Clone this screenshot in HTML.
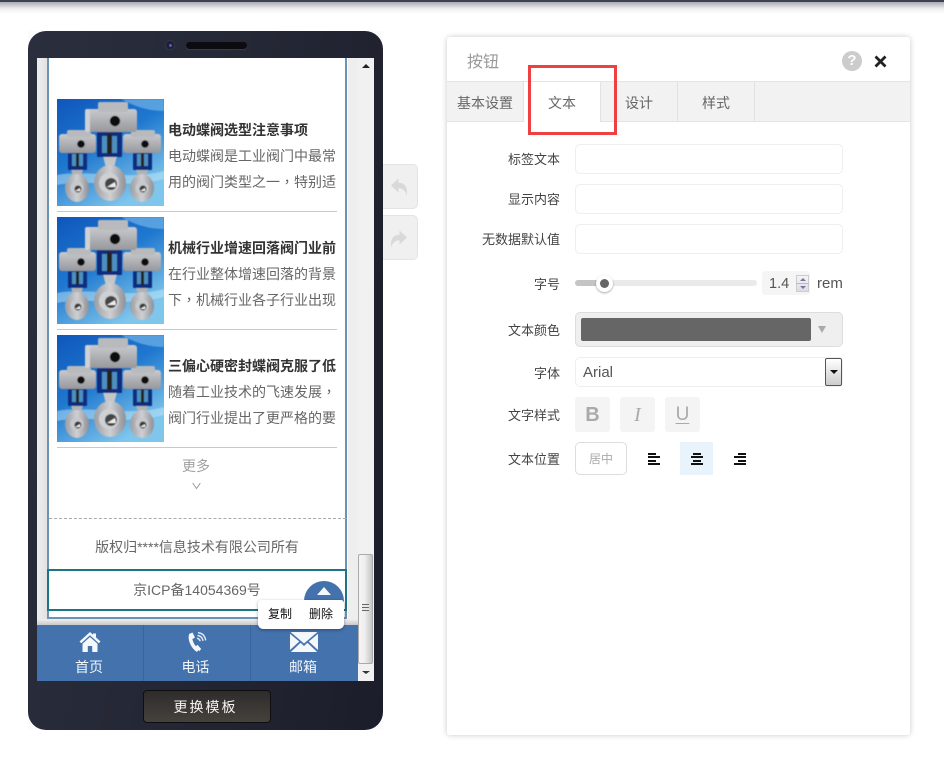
<!DOCTYPE html>
<html lang="zh"><head><meta charset="utf-8"><title>按钮</title>
<style>
*{box-sizing:border-box}
html,body{margin:0;padding:0}
body{width:944px;height:760px;background:#fff;position:relative;overflow:hidden;font-family:"Liberation Sans","Noto Sans CJK SC",sans-serif;color:#555}
.a{position:absolute}
.t{position:absolute;white-space:nowrap}
.c{font-family:"Noto Sans CJK TC",sans-serif}
.lb{position:absolute;left:447px;width:113px;text-align:right;font-size:13px;line-height:20px;color:#444;white-space:nowrap}
.in{position:absolute;left:575px;width:268px;height:30px;border:1px solid #eee;border-radius:5px;background:#fff}
.tab{position:absolute;top:81px;height:41px;width:77px;text-align:center;font-size:14px;line-height:45px;color:#666;border-right:1px solid #e2e2e2}
.ttl{position:absolute;left:168px;font-size:14px;font-weight:bold;color:#333;line-height:20px;white-space:nowrap;width:169px;overflow:hidden}
.ds{position:absolute;left:168px;font-size:14px;color:#666;line-height:26px;white-space:nowrap;width:170px;overflow:hidden}
.hr{position:absolute;left:57px;width:280px;height:1px;background:#c8c8c8}
.nv{position:absolute;top:659px;font-size:14px;line-height:16px;color:#f2f6fb;text-align:center}
.sb{position:absolute;top:397px;width:35px;height:35px;background:#f4f4f4;border-radius:3px;text-align:center;color:#aaa}
</style></head>
<body>
<svg width="0" height="0" style="position:absolute">
<defs>
<linearGradient id="vb" x1="0" y1="0" x2=".6" y2="1"><stop offset="0" stop-color="#0f56bb"/><stop offset=".5" stop-color="#1f78cf"/><stop offset="1" stop-color="#7fc6ec"/></linearGradient>
<linearGradient id="mt" x1="0" y1="0" x2="1" y2="0"><stop offset="0" stop-color="#9b9da2"/><stop offset=".5" stop-color="#cfd0d4"/><stop offset="1" stop-color="#8e9095"/></linearGradient>
<linearGradient id="bd" x1="0" y1="0" x2="0" y2="1"><stop offset="0" stop-color="#c9cacd"/><stop offset="1" stop-color="#96989d"/></linearGradient>
<filter id="sf" x="-5%" y="-5%" width="110%" height="110%"><feGaussianBlur stdDeviation=".4"/></filter>
<symbol id="valve" viewBox="0 0 107 107">
<rect width="107" height="107" fill="url(#vb)"/>
<g filter="url(#sf)">
<path d="M64 0C78 8 92 12 107 12V0Z" fill="#6fb4e8" opacity=".7"/>
<path d="M0 76C30 70 70 82 107 72V80C70 90 30 80 0 86Z" fill="#cdeefa" opacity=".45"/>
<path d="M14 70h12l-2 8h-8z" fill="#b0b2b6"/><path d="M79 70h12l-2 8h-8z" fill="#b0b2b6"/>
<ellipse cx="20" cy="89" rx="12" ry="14" fill="url(#mt)"/><circle cx="20" cy="89" r="6.500" fill="#c8c9cc"/><circle cx="21" cy="90" r="3.500" fill="#3a3a3d"/><path d="M18 92l5-3 .5 3z" fill="#eee"/>
<ellipse cx="85" cy="89" rx="12" ry="14" fill="url(#mt)"/><circle cx="85" cy="89" r="6.500" fill="#c8c9cc"/><circle cx="86" cy="90" r="3.500" fill="#3a3a3d"/><path d="M83 92l5-3 .5 3z" fill="#eee"/>
<rect x="11" y="52" width="19" height="19" rx="1" fill="#0e2f80"/><rect x="15" y="55" width="11" height="12" fill="#4e8fbe"/><rect x="19" y="53" width="3" height="15" fill="#222"/>
<rect x="76" y="52" width="19" height="19" rx="1" fill="#0e2f80"/><rect x="80" y="55" width="11" height="12" fill="#4e8fbe"/><rect x="84" y="53" width="3" height="15" fill="#222"/>
<rect x="2" y="35" width="37" height="19" rx="3" fill="url(#bd)"/><rect x="10" y="31" width="24" height="7" rx="2" fill="#b8babd"/><circle cx="24" cy="45" r="3.800" fill="#0a0a0a"/>
<rect x="66" y="35" width="38" height="19" rx="3" fill="url(#bd)"/><rect x="74" y="31" width="24" height="7" rx="2" fill="#b8babd"/><circle cx="88" cy="45" r="3.800" fill="#0a0a0a"/>
<path d="M46 57h14l-3 12h-8z" fill="#c4c6c9"/>
<ellipse cx="53" cy="84" rx="16" ry="18" fill="url(#mt)"/><circle cx="52" cy="84" r="10" fill="#cfd0d3"/><circle cx="54" cy="85" r="6" fill="#444"/><path d="M50 88l8-5 1 5z" fill="#eee"/>
<rect x="40" y="32" width="25" height="26" rx="1" fill="#0e2f80"/><rect x="45" y="37" width="15" height="17" fill="#4e8fbe"/><rect x="50" y="35" width="5" height="20" fill="#222"/>
<rect x="28" y="10" width="52" height="23" rx="3" fill="url(#bd)"/><rect x="28" y="10" width="5" height="23" rx="2" fill="#d0d1d4"/><rect x="41" y="3" width="30" height="10" rx="2" fill="#b8babd"/><circle cx="58" cy="22" r="5.200" fill="#0a0a0a"/>
</g>
</symbol>
</defs>
</svg>

<div class="a" style="left:0;top:0;width:944px;height:2px;background:#3f4350"></div>
<div class="a" style="left:0;top:2px;width:944px;height:12px;background:linear-gradient(#a9abb2,#eeeeef 55%,#fff)"></div>

<!-- phone -->
<div class="a" style="left:28px;top:31px;width:355px;height:699px;background:#fbfbfb"></div>
<div class="a" style="left:28px;top:31px;width:355px;height:699px;border-radius:18px;background:linear-gradient(100deg,#2b2f3d 0%,#252836 45%,#1c1d2b 100%)"></div>
<div class="a" style="left:166px;top:41px;width:8px;height:8px;border-radius:50%;background:#1d2030;box-shadow:0 0 0 1px #333748"></div>
<div class="a" style="left:169px;top:44px;width:3px;height:3px;border-radius:50%;background:#6a50b8"></div>
<div class="a" style="left:186px;top:42px;width:61px;height:7px;border-radius:4px;background:#0b0b10;box-shadow:0 1px 1px #3a3d4b"></div>

<!-- screen -->
<div class="a" style="left:37px;top:58px;width:337px;height:623px;background:#fff;overflow:hidden">
 <div class="a" style="left:0;top:0;width:10px;height:567px;background:linear-gradient(90deg,#eee,#e2e2e2)"></div>
 <div class="a" style="left:311px;top:0;width:10px;height:567px;background:#eee"></div>
 <div class="a" style="left:0;top:561px;width:321px;height:6px;background:linear-gradient(#efefef,#c9c9c9)"></div>
 <div class="a" style="left:321px;top:0;width:16px;height:623px;background:#f1f1f1"></div>
</div>
<div class="a" style="left:47px;top:58px;width:300px;height:561px;background:#fff;border:2px solid #6a93b4;border-top:0"></div>

<svg class="a" style="left:57px;top:99px" width="107" height="107"><use href="#valve"/></svg>
<svg class="a" style="left:57px;top:217px" width="107" height="107"><use href="#valve"/></svg>
<svg class="a" style="left:57px;top:335px" width="107" height="107"><use href="#valve"/></svg>

<div class="ttl" style="top:120px">电动蝶阀选型注意事项</div>
<div class="ds" style="top:143px">电动蝶阀是工业阀门中最常<br>用的阀门类型之一<span class="c" lang="zh-Hant">，</span>特别适</div>
<div class="hr" style="top:211px"></div>
<div class="ttl" style="top:238px">机械行业增速回落阀门业前</div>
<div class="ds" style="top:261px">在行业整体增速回落的背景<br>下<span class="c" lang="zh-Hant">，</span>机械行业各子行业出现</div>
<div class="hr" style="top:329px"></div>
<div class="ttl" style="top:356px">三偏心硬密封蝶阀克服了低</div>
<div class="ds" style="top:379px">随着工业技术的飞速发展<span class="c" lang="zh-Hant">，</span><br>阀门行业提出了更严格的要</div>
<div class="hr" style="top:447px"></div>

<div class="t" style="left:46px;width:300px;top:456px;text-align:center;font-size:14px;line-height:20px;color:#a0a0a0">更多</div>
<svg class="a" style="left:192px;top:482px" width="9" height="8"><path d="M.7 1l3.800 5.500L8.300 1" fill="none" stroke="#999" stroke-width="1"/></svg>
<div class="a" style="left:49px;top:518px;width:297px;border-top:1px dashed #aaa"></div>
<div class="t" style="left:47px;width:300px;top:537px;text-align:center;font-size:14px;line-height:20px;color:#666">版权归****信息技术有限公司所有</div>
<div class="a" style="left:47px;top:569px;width:300px;height:42px;border:2px solid #1b7585;background:#fff"></div>
<div class="t" style="left:47px;width:300px;top:580px;text-align:center;font-size:14px;line-height:20px;color:#666">京ICP备14054369号</div>

<!-- nav -->
<div class="a" style="left:37px;top:625px;width:321px;height:56px;background:#4372ad"></div>
<div class="a" style="left:143px;top:625px;width:1px;height:56px;background:#3a659c"></div>
<div class="a" style="left:250px;top:625px;width:1px;height:56px;background:#3a659c"></div>
<svg class="a" style="left:78px;top:631px" width="24" height="22"><path d="M12 1L1.500 10.500l1.700 1.700L12 4.300l8.800 7.900 1.700-1.700L18 6.400V2.500h-3v1.200z" fill="#f4f7fb"/><path d="M12 6L4.500 12.700V21h5.300v-6h4.400v6h5.300v-8.300z" fill="#f4f7fb"/></svg>
<svg class="a" style="left:186px;top:631px" width="22" height="22"><path d="M5 3.500C3 8 6.500 16 12 19.500" fill="none" stroke="#f4f7fb" stroke-width="3.600"/><path d="M3 3l3.500-1.500 2.500 5-3 1.800zM9.500 15.500l2-1.800 3.700 4.300-2 2.300z" fill="#f4f7fb"/><path d="M11 7.200c1.800.3 2.800 1.300 3.100 3.100M11.500 4.400c3.200.4 5 2.200 5.500 5.500M12 1.600c4.400.5 7 3.300 7.700 7.800" fill="none" stroke="#dde7f2" stroke-width="1.500"/></svg>
<svg class="a" style="left:290px;top:632px" width="28" height="20"><path d="M.5 0h27L14 11.500z" fill="#f4f7fb"/><path d="M0 1.800V18l9.300-8.500zM28 1.800V18l-9.300-8.500z" fill="#f4f7fb"/><path d="M.8 20h26.400l-9.800-9.200L14 14l-3.400-3.200z" fill="#f4f7fb"/></svg>
<div class="nv" style="left:36px;width:106px">首页</div>
<div class="nv" style="left:142px;width:107px">电话</div>
<div class="nv" style="left:249px;width:108px">邮箱</div>

<!-- back to top + popup, above nav -->
<div class="a" style="left:304px;top:581px;width:40px;height:40px;border-radius:50%;background:#4372ad"></div>
<div class="a" style="left:317px;top:587px;width:0;height:0;border-left:7px solid transparent;border-right:7px solid transparent;border-bottom:8px solid #f4f7fb"></div>
<div class="a" style="left:258px;top:600px;width:86px;height:29px;background:#fff;border-radius:3px 3px 5px 5px;box-shadow:0 1px 3px rgba(0,0,0,.35)"></div>
<div class="t" style="left:268px;top:605px;font-size:12px;line-height:18px;color:#111">复制</div>
<div class="t" style="left:309px;top:605px;font-size:12px;line-height:18px;color:#111">删除</div>

<!-- scrollbar -->
<div class="a" style="left:362px;top:64px;width:0;height:0;border-left:4px solid transparent;border-right:4px solid transparent;border-bottom:4px solid #222"></div>
<div class="a" style="left:362px;top:671px;width:0;height:0;border-left:4px solid transparent;border-right:4px solid transparent;border-top:3px solid #333"></div>
<div class="a" style="left:358px;top:554px;width:15px;height:110px;border:1px solid #aaa;border-radius:2px;background:linear-gradient(90deg,#f5f5f5,#eee 45%,#c4c4c4)"></div>
<div class="a" style="left:362px;top:604px;width:7px;height:7px;background:repeating-linear-gradient(#666 0 1px,#e8e8e8 1px 3px)"></div>

<!-- change template -->
<div class="a" style="left:143px;top:690px;width:128px;height:33px;border:1px solid #0e0e10;border-radius:4px;background:linear-gradient(#2e2c2b,#45423d);color:#f2f2f2;font-size:14px;line-height:32px;text-align:center;letter-spacing:2px;padding-right:3px">更换模板</div>

<!-- undo redo -->
<div class="a" style="left:383px;top:164px;width:35px;height:45px;background:#f0f0f0;border:1px solid #e4e4e4;border-left:0;border-radius:0 5px 5px 0"></div>
<div class="a" style="left:383px;top:215px;width:35px;height:45px;background:#f0f0f0;border:1px solid #e4e4e4;border-left:0;border-radius:0 5px 5px 0"></div>
<svg class="a" style="left:390px;top:177px" width="20" height="20"><path d="M1 8.500L8.500 1.500v4.300c6 0 9.500 4 8.200 12.700-1.300-5-4-7.300-8.200-7.300v4.300z" fill="#d9d9d9"/></svg>
<svg class="a" style="left:389px;top:229px" width="20" height="20"><path d="M18 8.500L10.500 1.500v4.300c-6 0-9.500 4-8.200 12.700 1.300-5 4-7.300 8.200-7.300v4.300z" fill="#d9d9d9"/></svg>

<!-- panel -->
<div class="a" style="left:447px;top:37px;width:463px;height:698px;background:#fff;border-radius:3px;box-shadow:0 0 6px rgba(0,0,0,.22)"></div>
<div class="t" style="left:467px;top:52px;font-size:16px;line-height:22px;color:#999">按钮</div>
<div class="a" style="left:842px;top:51px;width:20px;height:20px;border-radius:50%;background:#ccc;color:#fff;text-align:center;font-size:15px;font-weight:bold;line-height:20px">?</div>
<svg class="a" style="left:874px;top:55px" width="13" height="13"><path d="M1.500 1.500l10 10M11.500 1.500l-10 10" stroke="#222" stroke-width="2.800" fill="none"/></svg>

<div class="a" style="left:447px;top:81px;width:463px;height:41px;background:#f2f2f2;border-top:1px solid #e4e4e4;border-bottom:1px solid #e4e4e4"></div>
<div class="tab" style="left:447px">基本设置</div>
<div class="tab" style="left:524px;background:#fff;height:40px;top:82px;line-height:43px">文本</div>
<div class="tab" style="left:601px">设计</div>
<div class="tab" style="left:678px">样式</div>
<div class="a" style="left:528px;top:65px;width:89px;height:70px;border:3px solid #ee4040"></div>

<div class="lb" style="top:150px">标签文本</div>
<div class="in" style="top:144px"></div>
<div class="lb" style="top:190px">显示内容</div>
<div class="in" style="top:184px"></div>
<div class="lb" style="top:230px">无数据默认值</div>
<div class="in" style="top:224px"></div>

<div class="lb" style="top:275px">字号</div>
<div class="a" style="left:575px;top:280px;width:182px;height:6px;border-radius:3px;background:#eaeaea"></div>
<div class="a" style="left:575px;top:280px;width:29px;height:6px;border-radius:3px 0 0 3px;background:#c4c4c4"></div>
<div class="a" style="left:596px;top:275px;width:17px;height:17px;border-radius:50%;background:#fff;box-shadow:0 1px 2px rgba(0,0,0,.35)"></div>
<div class="a" style="left:600px;top:279px;width:9px;height:9px;border-radius:50%;background:#666"></div>
<div class="a" style="left:762px;top:271px;width:48px;height:24px;border-radius:3px;background:#f5f5f5"></div>
<div class="t" style="left:769px;top:274px;font-size:14.500px;line-height:20px;color:#555">1.4</div>
<div class="a" style="left:796px;top:275px;width:13px;height:17px;border:1px solid #ccc;background:linear-gradient(#f4f4f8,#dcdce6)"></div>
<div class="a" style="left:796px;top:283px;width:13px;height:1px;background:#bbb"></div>
<div class="a" style="left:800px;top:278px;border-left:3px solid transparent;border-right:3px solid transparent;border-bottom:3px solid #77779a"></div>
<div class="a" style="left:800px;top:286px;border-left:3px solid transparent;border-right:3px solid transparent;border-top:3px solid #77779a"></div>
<div class="t" style="left:817px;top:274px;font-size:15px;line-height:20px;color:#555">rem</div>

<div class="lb" style="top:321px">文本颜色</div>
<div class="a" style="left:575px;top:312px;width:268px;height:35px;background:#efefef;border:1px solid #ddd;border-radius:5px"></div>
<div class="a" style="left:581px;top:318px;width:230px;height:23px;background:#666;border-radius:2px"></div>
<div class="a" style="left:818px;top:326px;border-left:4px solid transparent;border-right:4px solid transparent;border-top:7px solid #aaa"></div>

<div class="lb" style="top:364px">字体</div>
<div class="a" style="left:575px;top:357px;width:268px;height:30px;border:1px solid #eee;border-radius:5px;background:#fff"></div>
<div class="t" style="left:583px;top:363px;font-size:15px;line-height:20px;color:#555">Arial</div>
<div class="a" style="left:825px;top:358px;width:17px;height:28px;border:1px solid #555;border-radius:2px;background:linear-gradient(#fff,#ccc)"></div>
<div class="a" style="left:830px;top:370px;border-left:4px solid transparent;border-right:4px solid transparent;border-top:4px solid #111"></div>

<div class="lb" style="top:406px">文字样式</div>
<div class="sb" style="left:575px;font-size:20px;font-weight:bold;line-height:36px;color:#aaa">B</div>
<div class="sb" style="left:620px;font-size:20px;font-style:italic;line-height:36px;font-family:'Liberation Serif',serif">I</div>
<div class="sb" style="left:665px;font-size:19px;line-height:36px;text-decoration:underline;text-underline-offset:3px">U</div>

<div class="lb" style="top:450px">文本位置</div>
<div class="a" style="left:575px;top:442px;width:52px;height:33px;border:1px solid #ddd;border-radius:5px;font-size:12px;line-height:33px;text-align:center;color:#aaa">居中</div>
<div class="a" style="left:680px;top:442px;width:33px;height:33px;background:#e8f3fc"></div>
<svg class="a" style="left:648px;top:453px" width="98" height="13" shape-rendering="crispEdges">
<g fill="#111">
<rect x="0" y="0" width="8" height="2"/><rect x="0" y="3" width="12" height="2"/><rect x="0" y="7" width="8" height="2"/><rect x="0" y="10" width="12" height="2"/>
<rect x="45" y="0" width="8" height="2"/><rect x="43" y="3" width="12" height="2"/><rect x="45" y="7" width="8" height="2"/><rect x="43" y="10" width="12" height="2"/>
<rect x="90" y="0" width="8" height="2"/><rect x="86" y="3" width="12" height="2"/><rect x="90" y="7" width="8" height="2"/><rect x="86" y="10" width="12" height="2"/>
</g></svg>
</body></html>
